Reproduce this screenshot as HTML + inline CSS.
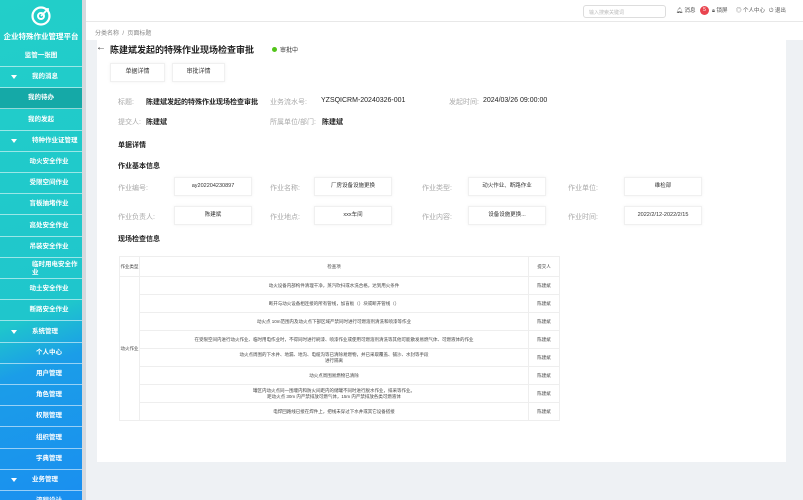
<!DOCTYPE html>
<html><head><meta charset="utf-8"><style>
*{margin:0;padding:0;box-sizing:border-box}
body{width:803px;height:500px;overflow:hidden;font-family:"Liberation Sans","Noto Sans CJK SC",sans-serif;background:#eef1f4;position:relative;font-size:7px;color:#333}
.sb{position:absolute;left:0;top:0;width:82px;height:500px;background:linear-gradient(160deg,#22cfc9 0%,#1fc6cc 62%,#1b9de8 72%,#1a8ff0 100%);color:#fff;overflow:hidden}
.gap{position:absolute;left:82px;top:0;width:4px;height:500px;background:#d5d9de}
.it{position:absolute;left:0;width:82px;height:21px;border-bottom:1px solid rgba(255,255,255,.55);font-size:6.5px;font-weight:bold;line-height:20px;text-align:center}
.it.g{text-align:left;padding-left:32px}
.it.g:before{content:"";position:absolute;left:11px;top:8px;border-left:3.5px solid transparent;border-right:3.5px solid transparent;border-top:4px solid #fff}
.it.s{padding-left:16px}
.hd{position:absolute;left:86px;top:0;right:0;height:22px;background:#fff;border-bottom:1px solid #e8e8e8}
.bc{position:absolute;left:86px;top:22px;right:0;height:18px;background:#fff;font-size:6px;color:#888;padding:6px 0 0 9px}
.card{position:absolute;left:97px;top:40px;width:689px;height:422px;background:#fff}
.t{position:absolute;white-space:nowrap}
.lb{color:#aaa;font-size:7px}
.v{color:#222;font-size:7px;font-weight:bold}
.h{font-size:7px;font-weight:bold;color:#222}
.box{position:absolute;height:19px;border:1px solid #f0f0f0;box-shadow:0 0 3px rgba(0,0,0,.06);font-size:5.5px;text-align:center;line-height:17px;color:#333;white-space:nowrap;overflow:hidden}
table{position:absolute;left:22px;top:216px;width:441px;border-collapse:collapse;font-size:4.5px;color:#444}
td{border:1px solid #eee;text-align:center;height:18px;line-height:6px}
</style></head><body>
<div class="sb">
 <svg style="position:absolute;left:30px;top:5px" width="22" height="22" viewBox="0 0 22 22"><circle cx="11" cy="11" r="8.5" fill="none" stroke="#fff" stroke-width="2.2"/><circle cx="11" cy="11" r="3" fill="none" stroke="#fff" stroke-width="2"/><path d="M11 11 L17 5 M15 4 L18 4 L18 7" stroke="#fff" stroke-width="1.8" fill="none"/></svg>
 <div style="position:absolute;top:31px;width:82px;text-align:center;font-size:7.5px;font-weight:bold">企业特殊作业管理平台</div>
 <div class="it" style="top:46px">监管一张图</div>
 <div class="it g" style="top:67.2px">我的消息</div>
 <div class="it" style="top:88.4px;background:#15a9a7">我的待办</div>
 <div class="it" style="top:109.6px">我的发起</div>
 <div class="it g" style="top:130.8px">特种作业证管理</div>
 <div class="it s" style="top:152px">动火安全作业</div>
 <div class="it s" style="top:173.2px">受限空间作业</div>
 <div class="it s" style="top:194.4px">盲板抽堵作业</div>
 <div class="it s" style="top:215.6px">高处安全作业</div>
 <div class="it s" style="top:236.8px">吊装安全作业</div>
 <div class="it" style="top:258px;line-height:8px;padding:3px 0 0 32px;text-align:left">临时用电安全作<br>业</div>
 <div class="it s" style="top:279.2px">动土安全作业</div>
 <div class="it s" style="top:300.4px">断路安全作业</div>
 <div class="it g" style="top:321.6px">系统管理</div>
 <div class="it s" style="top:342.8px">个人中心</div>
 <div class="it s" style="top:364px">用户管理</div>
 <div class="it s" style="top:385.2px">角色管理</div>
 <div class="it s" style="top:406.4px">权限管理</div>
 <div class="it s" style="top:427.6px">组织管理</div>
 <div class="it s" style="top:448.8px">字典管理</div>
 <div class="it g" style="top:470px">业务管理</div>
 <div class="it s" style="top:491.2px">流程设计</div>
</div>
<div class="gap"></div>
<div class="hd">
 <div style="position:absolute;left:497px;top:5px;width:83px;height:13px;border:1px solid #ddd;border-radius:3px;font-size:5px;color:#bbb;padding:3px 5px">输入搜索关键词</div>
 <div class="t" style="left:590px;top:6px;font-size:5.5px;color:#555">🔔︎ 消息</div>
 <div style="position:absolute;left:614px;top:6px;width:9px;height:9px;border-radius:50%;background:#e9444f;color:#fff;font-size:5px;text-align:center;line-height:9px">5</div>
 <div class="t" style="left:626px;top:6px;font-size:5.5px;color:#555">🔒︎ 锁屏</div>
 <div class="t" style="left:650px;top:6px;font-size:5.5px;color:#555">◎ 个人中心</div>
 <div class="t" style="left:683px;top:6px;font-size:5.5px;color:#555">⏻ 退出</div>
</div>
<div class="bc">分类名称 &nbsp;/ &nbsp;页面标题</div>
<div class="card">
 <div class="t" style="left:-1px;top:2px;font-size:10px;color:#333">←</div>
 <div class="t" style="left:13px;top:3px;font-size:9px;font-weight:bold;color:#222">陈建斌发起的特殊作业现场检查审批</div>
 <div style="position:absolute;left:175px;top:7px;width:5px;height:5px;border-radius:50%;background:#52c41a"></div>
 <div class="t" style="left:183px;top:5px;font-size:6px;color:#333">审批中</div>
 <div class="box" style="left:13px;top:23px;width:55px;height:19px;line-height:17px;font-size:6px">单据详情</div>
 <div class="box" style="left:75px;top:23px;width:53px;height:19px;line-height:17px;font-size:6px">审批详情</div>
 <div class="t lb" style="left:21px;top:57px">标题:</div><div class="t v" style="left:49px;top:57px">陈建斌发起的特殊作业现场检查审批</div>
 <div class="t lb" style="left:173px;top:57px">业务流水号:</div><div class="t" style="left:224px;top:57px;color:#222">YZSQICRM-20240326-001</div>
 <div class="t lb" style="left:352px;top:57px">发起时间:</div><div class="t" style="left:386px;top:57px;color:#222">2024/03/26 09:00:00</div>
 <div class="t lb" style="left:21px;top:77px">提交人:</div><div class="t v" style="left:49px;top:77px">陈建斌</div>
 <div class="t lb" style="left:173px;top:77px">所属单位/部门:</div><div class="t v" style="left:225px;top:77px">陈建斌</div>
 <div class="t h" style="left:21px;top:100px">单据详情</div>
 <div class="t h" style="left:21px;top:121px">作业基本信息</div>
 <div class="t lb" style="left:21px;top:143px">作业编号:</div><div class="box" style="left:77px;top:137px;width:78px">ay202204230897</div>
 <div class="t lb" style="left:173px;top:143px">作业名称:</div><div class="box" style="left:217px;top:137px;width:78px">厂房设备设施更换</div>
 <div class="t lb" style="left:325px;top:143px">作业类型:</div><div class="box" style="left:371px;top:137px;width:78px">动火作业、断路作业</div>
 <div class="t lb" style="left:471px;top:143px">作业单位:</div><div class="box" style="left:527px;top:137px;width:78px">维检部</div>
 <div class="t lb" style="left:21px;top:172px">作业负责人:</div><div class="box" style="left:77px;top:166px;width:78px">陈建斌</div>
 <div class="t lb" style="left:173px;top:172px">作业地点:</div><div class="box" style="left:217px;top:166px;width:78px">xxx车间</div>
 <div class="t lb" style="left:325px;top:172px">作业内容:</div><div class="box" style="left:371px;top:166px;width:78px">设备设施更换...</div>
 <div class="t lb" style="left:471px;top:172px">作业时间:</div><div class="box" style="left:527px;top:166px;width:78px">2022/2/12-2022/2/15</div>
 <div class="t h" style="left:21px;top:194px">现场检查信息</div>
 <table>
  <tr><td style="width:20px;height:20px">作业类型</td><td>检查项</td><td style="width:31px">提交人</td></tr>
  <tr><td rowspan="8">动火作业</td><td>动火设备内部构件清理干净，蒸汽吹扫或水洗合格，达到用火条件</td><td>陈建斌</td></tr>
  <tr><td>断开与动火设备相连接的所有管线，加盲板（）块或断开管线（）</td><td>陈建斌</td></tr>
  <tr><td>动火点 10m范围内及动火点下部区域严禁同时进行可燃溶剂清洗和喷漆等作业</td><td>陈建斌</td></tr>
  <tr><td>在受限空间内进行动火作业、临时用电作业时，不得同时进行刷漆、喷漆作业或使用可燃溶剂清洗等其他可能散发易燃气体、可燃液体的作业</td><td>陈建斌</td></tr>
  <tr><td>动火点周围的下水井、地漏、地沟、电缆沟等已清除易燃物，并已采取覆盖、铺沙、水封等手段<br>进行隔离</td><td>陈建斌</td></tr>
  <tr><td style="height:17px">动火点周围易燃物已清除</td><td>陈建斌</td></tr>
  <tr><td>罐区内动火点同一围堰内和防火间距内的储罐不同时进行脱水作业，排采等作业。<br>距动火点 30m 内严禁排放可燃气体，15m 内严禁排放各类可燃液体</td><td>陈建斌</td></tr>
  <tr><td style="height:16px">电焊回路线已接在焊件上，把线未穿过下水井或其它设备搭接</td><td>陈建斌</td></tr>
 </table>
</div>
</body></html>
